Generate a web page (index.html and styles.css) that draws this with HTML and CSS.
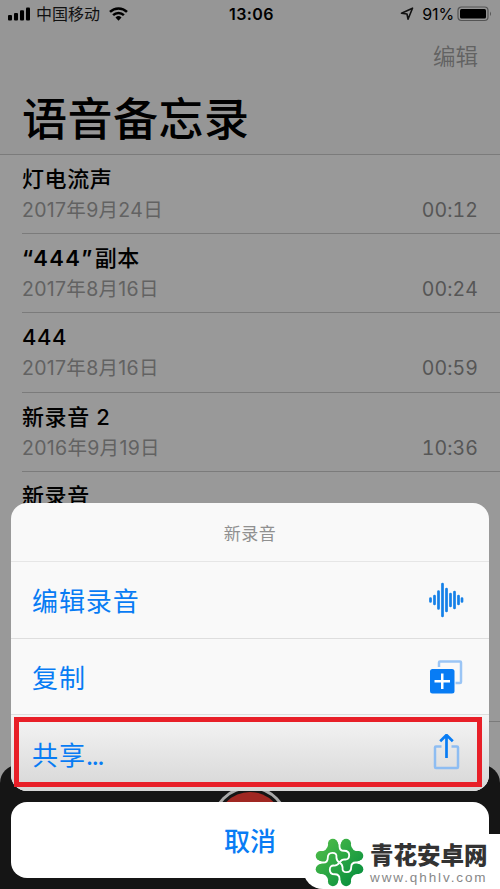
FILE: index.html
```html
<!DOCTYPE html>
<html lang="zh-CN">
<head>
<meta charset="utf-8">
<title>语音备忘录</title>
<link rel="stylesheet" href="styles.css">
</head>
<body>
<div class="phone">
  <header class="header">
    <div class="status">
      <div class="carrier">
        <svg width="23" height="14" viewBox="0 0 23 14"><rect x="0" y="8" width="4" height="5.500" rx="1"/><rect x="6" y="6" width="4" height="7.500" rx="1"/><rect x="12" y="3.300" width="4" height="10.200" rx="1"/><rect x="18" y="0.500" width="4" height="13" rx="1"/></svg>
        <span class="carrier-name">中国移动</span>
        <svg class="wifi" width="19" height="14" viewBox="0 0 19 14"><path d="M1 4.900a12.200 12.200 0 0 1 17 0M4.100 8.200a7.700 7.700 0 0 1 10.800 0" fill="none" stroke="#000" stroke-width="2.500"/><path d="M6.500 10.500a4.300 4.300 0 0 1 6 0L9.500 13.700z"/></svg>
      </div>
      <span class="clock">13:06</span>
      <div class="power">
        <svg width="14" height="14" viewBox="0 0 14 14"><path d="M1.500 6.300 12.500 1.200 8 12.200 7 7z" fill="none" stroke="#111" stroke-width="1.600" stroke-linejoin="round"/></svg>
        <span class="percent">91%</span>
        <svg width="36" height="16" viewBox="0 0 36 16"><rect x="1" y="1" width="30" height="13.500" rx="3.500" fill="none" stroke="#545454" stroke-width="1.200"/><rect x="3" y="3" width="26" height="9.500" rx="1.500"/><path d="M33 5.500q2 2.300 0 4.600z" fill="#545454"/></svg>
      </div>
    </div>
    <div class="edit">编辑</div>
    <h1>语音备忘录</h1>
  </header>
  <main class="list">
    <div class="row"><div class="name">灯电流声</div><div class="meta"><span>2017年9月24日</span><span class="time">00:12</span></div></div>
    <div class="row"><div class="name"><span class="quoted">“444”</span>副本</div><div class="meta"><span>2017年8月16日</span><span class="time">00:24</span></div></div>
    <div class="row"><div class="name">444</div><div class="meta"><span>2017年8月16日</span><span class="time">00:59</span></div></div>
    <div class="row"><div class="name">新录音 2</div><div class="meta"><span>2016年9月19日</span><span class="time">10:36</span></div></div>
    <div class="row last"><div class="name">新录音</div></div>
  </main>
  <div class="recorder"><div class="record"><i></i></div></div>
  <div class="sheet">
    <div class="menu">
      <div class="title">新录音</div>
      <div class="item"><span>编辑录音</span>
        <svg width="36" height="36" viewBox="0 0 36 36"><path d="M2.500 16.500v3M6.500 14v8M10.500 9.500v17M14.500 2v32M18.500 7v22M22.500 12v12M26.500 10v16M30.500 14v8M34 16.500v3" stroke="#1580e8" stroke-width="2.700" stroke-linecap="round"/></svg></div>
      <div class="item"><span>复制</span>
        <svg width="36" height="36" viewBox="0 0 36 36"><path d="M11 9V4.500q0-1 1-1H32q1 0 1 1V24q0 1-1 1h-4.500" fill="none" stroke="#9bc5f5" stroke-width="2.500"/><rect x="2" y="11" width="24.500" height="24.500" rx="2.500" fill="#087cf4"/><path d="M14.250 15.500v15.500M6.500 23.250H22" stroke="#fff" stroke-width="2.500"/></svg></div>
      <div class="item share"><span>共享<span class="dots">...</span></span>
        <svg width="36" height="38" viewBox="0 0 36 38"><path d="M13.500 12.500H8q-1 0-1 1V33q0 1 1 1H29q1 0 1-1V13.500q0-1-1-1h-5.500" fill="none" stroke="#8ebdf2" stroke-width="2.500"/><path d="M18.500 24V1M12.200 7.200l6.300-6.200 6.300 6.200" fill="none" stroke="#087cf4" stroke-width="2.700"/></svg></div>
    </div>
    <div class="cancel">取消</div>
  </div>
  <div class="highlight"></div>
  <footer class="brand">
    <svg class="logo" width="49" height="49" viewBox="0 0 48 48">
      <defs><linearGradient id="g" gradientUnits="userSpaceOnUse" x1="5" y1="5" x2="43" y2="43"><stop stop-color="#4cbb48"/><stop offset="1" stop-color="#078f3e"/></linearGradient></defs>
      <g fill="url(#g)"><circle cx="17.500" cy="5.500" r="4.800"/><circle cx="30.500" cy="5.500" r="4.800"/><circle cx="5.500" cy="17.500" r="4.800"/><circle cx="42.500" cy="17.500" r="4.800"/><circle cx="5.500" cy="30.500" r="4.800"/><circle cx="42.500" cy="30.500" r="4.800"/><circle cx="17.500" cy="42.500" r="4.800"/><circle cx="30.500" cy="42.500" r="4.800"/>
      <path d="M13 6Q12 13 5 13L4 22Q10 24 4 26L5 35Q12 35 13 42L22 44Q24 38 26 44L35 42Q36 35 43 35L44 26Q38 24 44 22L43 13Q36 13 35 6L26 4Q24 10 22 4z"/></g>
      <g fill="none" stroke="#fff" stroke-width="1.800">
        <path id="petal" d="M3 24H8Q12.500 24 12.500 19.500Q12.500 14.500 17 14.500T21 19Q21 22 24 24"/>
        <use href="#petal" transform="rotate(90 24 24)"/><use href="#petal" transform="rotate(180 24 24)"/><use href="#petal" transform="rotate(270 24 24)"/>
      </g>
    </svg>
    <div class="words"><div class="brand-name">青花安卓网</div><div class="url">www.qhhlv.com</div></div>
  </footer>
</div>
</body>
</html>
```
FILE: styles.css
```css
* { box-sizing: border-box; }
body { margin: 0; font-family: Inter, "Noto Sans CJK SC", sans-serif; }
svg { display: block; flex: none; }
.phone { position: relative; width: 500px; height: 889px; overflow: hidden; background: #999; color: #000; }
.header { height: 155px; background: #969696; border-bottom: 1px solid #7b7b7b; }
.status { display: grid; grid-template-columns: 1fr auto 1fr; align-items: center; height: 28px; padding: 0 7px 0 8px; }
.carrier, .power { display: flex; align-items: center; }
.carrier-name { margin-left: 5px; font-size: 16px; line-height: 28px; color: #111; }
.wifi { margin-left: 9px; }
.clock { font-size: 16px; font-weight: 600; letter-spacing: .4px; padding-left: 2px; }
.power { justify-content: flex-end; }
.percent { margin: 0 3px 0 8px; font-size: 16px; letter-spacing: -.1px; }
.edit { height: 56px; padding-right: 22px; text-align: right; font-size: 22.500px; line-height: 57px; color: #626262; font-weight: 350; }
h1 { margin: 0; padding-left: 22px; font-size: 45px; font-weight: 500; line-height: 71px; letter-spacing: .5px; }
.row { height: 79.200px; margin-left: 22px; padding: 9px 22px 0 0; border-bottom: 1px solid #7b7b7b; }
.row.last { height: 250px; }
.name { height: 31px; font-size: 22px; line-height: 31px; font-weight: 500; letter-spacing: .6px; white-space: pre; }
.quoted { letter-spacing: 1.400px; margin-right: 1px; font-weight: 600; }
.meta { display: flex; justify-content: space-between; font-size: 19.500px; line-height: 31px; font-weight: 400; letter-spacing: .3px; color: #626262; }
.time { letter-spacing: .1px; font-variant-numeric: tabular-nums; color: #565656; }
.recorder { position: absolute; left: 0; right: 0; top: 765px; height: 124px; border-radius: 18px 18px 0 0; background: #151515; }
.record { width: 78px; height: 78px; margin: 21px auto 0; padding: 3px; border: 3px solid #aaa; border-radius: 50%; }
.record i { display: block; height: 66px; border-radius: 50%; background: #a02722; }
.sheet { position: absolute; left: 11px; top: 503px; width: 478px; }
.menu { height: 288px; border-radius: 16px; overflow: hidden; background: #f9f9f9; color: #087cf4; }
.title { height: 59px; text-align: center; font-size: 17px; line-height: 62px; letter-spacing: .5px; color: #909090; border-bottom: 1px solid #e6e6e6; }
.item { display: flex; justify-content: space-between; align-items: center; height: 76.500px; padding: 0 25px 0 21px; font-size: 26px; font-weight: 400; letter-spacing: .9px; border-bottom: 1px solid #dedede; }
.dots { letter-spacing: -1.800px; }
.item.share { border: 0; background: linear-gradient(#f5f5f5, #d6d6d6); }
.cancel { height: 76px; margin-top: 11px; border-radius: 16px; background: #fff; color: #087cf4; text-align: center; font-size: 26px; line-height: 79px; font-weight: 500; }
.highlight { position: absolute; left: 14px; top: 717px; width: 468px; height: 70px; border: 5px solid #e81f28; }
.brand { position: absolute; right: 0; bottom: 0; width: 197px; height: 55px; display: flex; padding: 4px 12px 0 12px; background: #fff; border-bottom-left-radius: 20px; }
.words { margin-left: 6px; width: 119px; }
.brand-name { height: 32px; font-size: 23.500px; line-height: 36px; font-weight: 900; color: #333; white-space: nowrap; }
.url { font-family: "Liberation Sans", Arial, sans-serif; font-size: 13.500px; line-height: 16px; letter-spacing: 1.900px; color: #888; }
```
